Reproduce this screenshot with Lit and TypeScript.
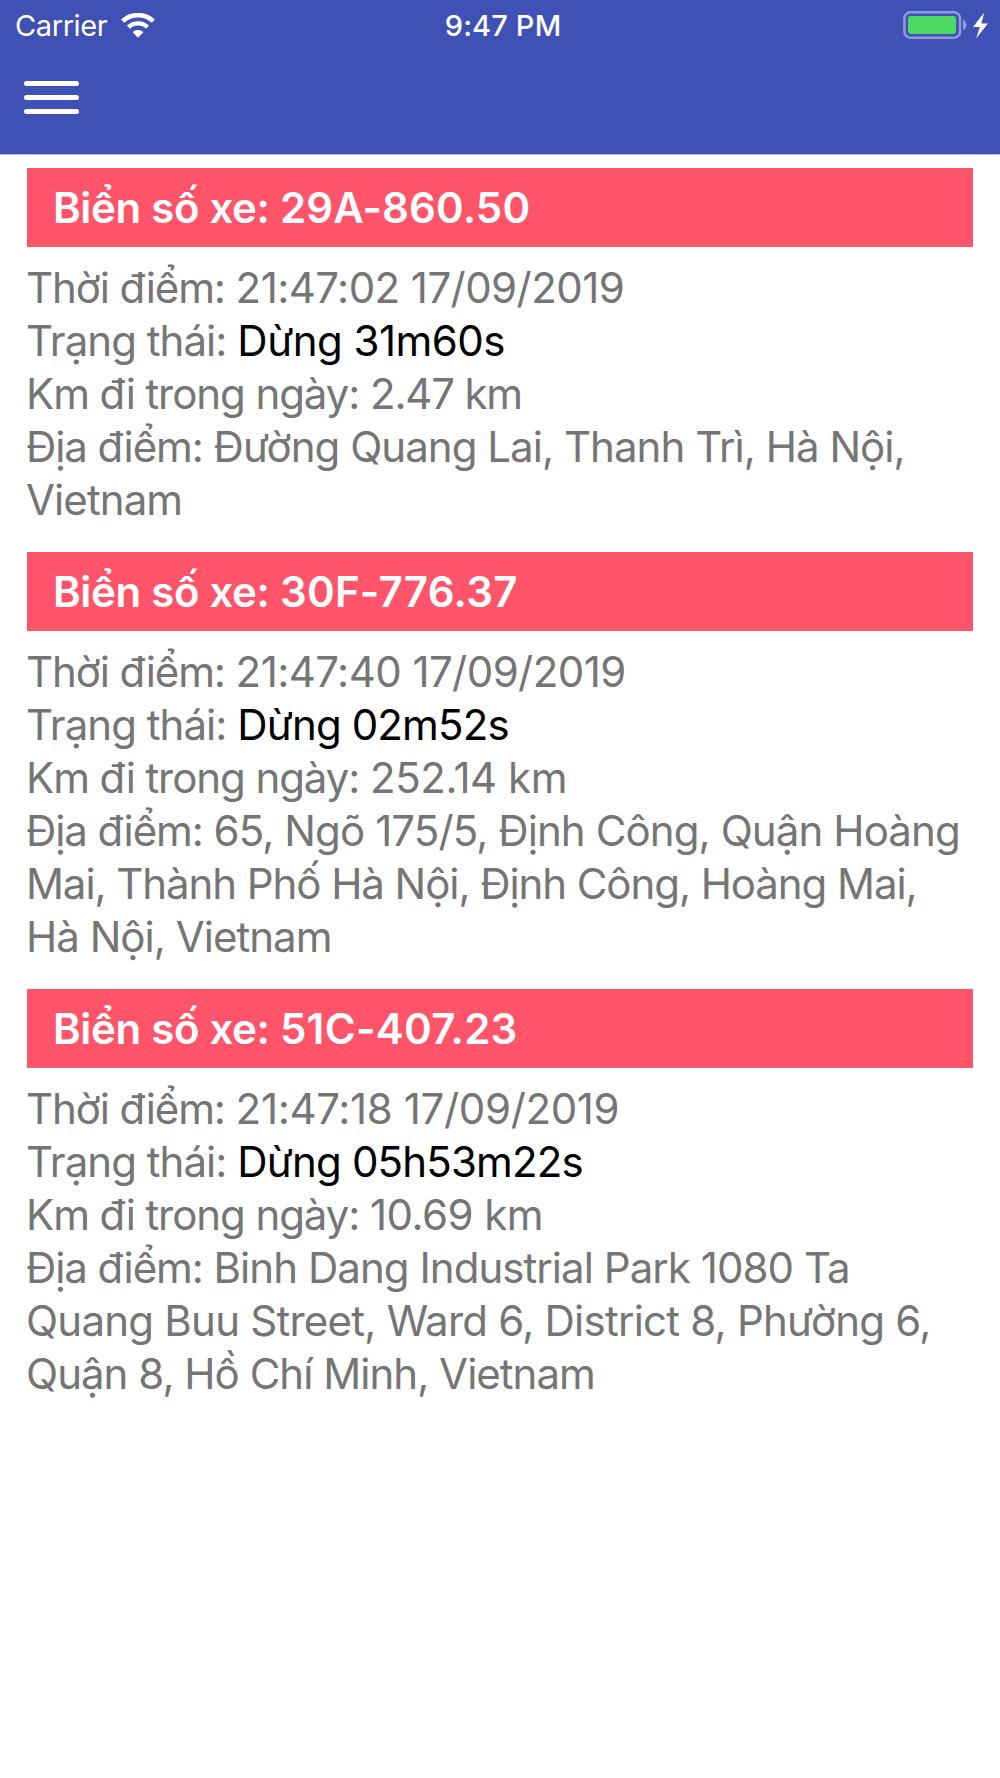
import { LitElement, html, css } from "lit";
import { customElement, property } from "lit/decorators.js";

/** A run of text and its letter-spacing in pixels. */
type Run = [text: string, tracking: number];

interface Vehicle {
  plate: Run;
  time: Run;
  status: Run;
  km: Run;
  address: Run[];
}

const vehicles: Vehicle[] = [
  {
    plate: ["29A-860.50", 0.12],
    time: ["21:47:02 17/09/2019", -0.56],
    status: ["Dừng 31m60s", -0.52],
    km: ["2.47 km", -1.2],
    address: [["Đường Quang Lai, Thanh Trì, Hà Nội,", -0.96], ["Vietnam", -0.9]],
  },
  {
    plate: ["30F-776.37", 0.28],
    time: ["21:47:40 17/09/2019", -0.56],
    status: ["Dừng 02m52s", -0.87],
    km: ["252.14 km", -0.45],
    address: [
      ["65, Ngõ 175/5, Định Công, Quận Hoàng", -0.9],
      ["Mai, Thành Phố Hà Nội, Định Công, Hoàng Mai,", -1.07],
      ["Hà Nội, Vietnam", -0.97],
    ],
  },
  {
    plate: ["51C-407.23", 0.3],
    time: ["21:47:18 17/09/2019", -0.34],
    status: ["Dừng 05h53m22s", -0.84],
    km: ["10.69 km", -0.55],
    address: [
      ["Binh Dang Industrial Park 1080 Ta", -0.95],
      ["Quang Buu Street, Ward 6, District 8, Phường 6,", -0.76],
      ["Quận 8, Hồ Chí Minh, Vietnam", -0.97],
    ],
  },
];

const run = ([text, tracking]: Run) => html`<span style="letter-spacing:${tracking}px">${text}</span>`;

@customElement("status-bar")
class StatusBar extends LitElement {
  static styles = css`
    :host {
      display: grid;
      grid-template-columns: 1fr auto 1fr;
      align-items: center;
      height: 50px;
      padding: 0 12px 0 15px;
      color: #fff;
      font-size: 29px;
      line-height: 51px;
    }
    .left { display: flex; align-items: center; gap: 13.5px; }
    .carrier { letter-spacing: -0.4px; }
    .time { font-weight: 500; padding-left: 3px; letter-spacing: 0.15px; }
    .right { display: flex; justify-content: flex-end; }
    svg { display: block; }
    .wifi { margin-bottom: 1px; }
  `;
  render() {
    return html`
      <div class="left">
        <span class="carrier">Carrier</span>
        <svg class="wifi" width="34" height="25" viewBox="0 0 34 25" fill="none">
          <path d="M1.7 8.1 A22.5 22.5 0 0 1 32.3 8.1" stroke="#fff" stroke-width="4.6" />
          <path d="M7.4 14.2 A14 14 0 0 1 26.6 14.2" stroke="#fff" stroke-width="4.4" />
          <path d="M11.6 19.2 A8 8 0 0 1 22.4 19.2 L17 24.7 Z" fill="#fff" />
        </svg>
      </div>
      <span class="time">9:47 PM</span>
      <div class="right">
        <svg width="85" height="30" viewBox="0 0 85 30">
          <rect x="1.4" y="1.3" width="55.6" height="25.4" rx="6" fill="none" stroke="#fff" stroke-opacity=".42" stroke-width="2.5" />
          <rect x="5" y="5" width="48" height="18" rx="3" fill="#4cd964" />
          <path d="M60 8.8 Q63.3 10.5 63.3 14 Q63.3 17.5 60 19.2 Z" fill="#fff" fill-opacity=".45" />
          <path d="M81.2 1.6 L70 16 H76.8 L73.2 27.2 L85 12.4 H78.4 Z" fill="#fff" />
        </svg>
      </div>
    `;
  }
}

@customElement("vehicle-card")
class VehicleCard extends LitElement {
  @property({ attribute: false }) vehicle!: Vehicle;
  static styles = css`
    :host { display: block; }
    .plate {
      height: 79px;
      line-height: 79px;
      padding-left: 26px;
      background: #ff5469;
      color: #fff;
      font-weight: 600;
      letter-spacing: -0.33px;
      white-space: nowrap;
    }
    .info { padding: 14px 0 26px; margin-left: -1px; color: #757575; letter-spacing: -1.08px; }
    .row { line-height: 53px; height: 53px; white-space: nowrap; }
    .state { letter-spacing: -0.95px; }
    .status { color: #000; }
  `;
  render() {
    const v = this.vehicle;
    return html`
      <div class="plate">Biển số xe: ${run(v.plate)}</div>
      <div class="info">
        <div class="row">Thời điểm: ${run(v.time)}</div>
        <div class="row state">Trạng thái: <span class="status">${run(v.status)}</span></div>
        <div class="row">Km đi trong ngày: ${run(v.km)}</div>
        ${v.address.map((line, i) => html`<div class="row">${i === 0 ? "Địa điểm: " : ""}${run(line)}</div>`)}
      </div>
    `;
  }
}

@customElement("app-root")
class AppRoot extends LitElement {
  static styles = css`
    :host {
      display: block;
      min-height: 1778px;
      background: #fff;
      font-family: Inter, "Liberation Sans", sans-serif;
      font-size: 42px;
    }
    .header { box-sizing: border-box; height: 155px; background: #3f51b5; border-bottom: 1px solid #b3b9e0; }
    .menu { display: flex; flex-direction: column; gap: 8.6px; width: 55px; padding: 31.4px 0 0 24px; }
    .bar { height: 5px; border-radius: 3px; background: #fff; }
    .list { padding: 13px 27px 0; }
  `;
  render() {
    return html`
      <div class="header">
        <status-bar></status-bar>
        <div class="menu"><div class="bar"></div><div class="bar"></div><div class="bar"></div></div>
      </div>
      <div class="list">${vehicles.map((v) => html`<vehicle-card .vehicle=${v}></vehicle-card>`)}</div>
    `;
  }
}
